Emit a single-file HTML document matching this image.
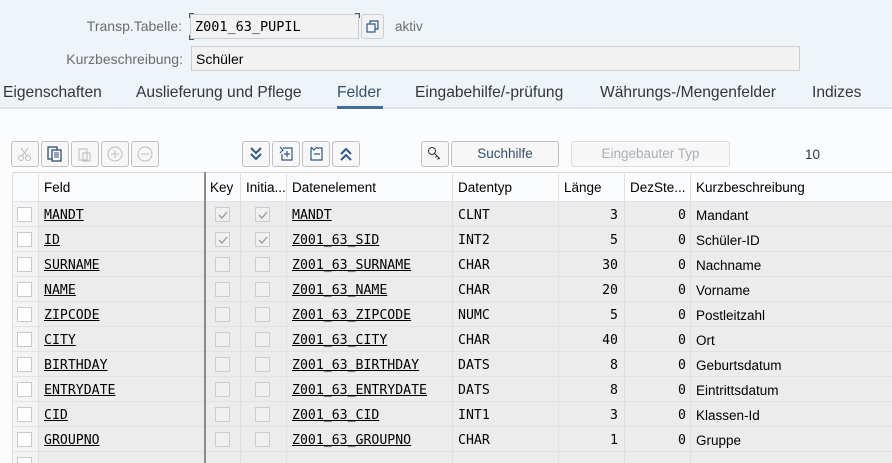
<!DOCTYPE html>
<html><head><meta charset="utf-8"><style>
*{margin:0;padding:0;box-sizing:border-box}
html,body{width:892px;height:463px;overflow:hidden}
body{background:#eff4f9;font-family:"Liberation Sans","DejaVu Sans",sans-serif;position:relative;color:#32363a}
.a{position:absolute}
.lbl{font-size:14px;color:#6a6d70;text-align:right}
.inp{border:1px solid #c8cdd2;background:#f2f2f2;font-size:14px;padding:4px 4px;color:#000}
.tab{font-size:15.6px;color:#32363a;top:84px}
.btn{border:1px solid #bfbfbf;border-radius:3px;background:#f7f7f7;height:26px;top:141px}
.panel{left:0;top:108px;width:892px;height:355px;background:#fbfcfe}
.tbl{left:12px;top:172px;width:880px;height:291px;overflow:hidden}
.cell{position:absolute;font-size:13.5px;line-height:25px}
.mono{font-family:"DejaVu Sans Mono","Liberation Mono",monospace;font-size:13.2px;text-decoration:underline;color:#000}
.m2{font-family:"DejaVu Sans Mono","Liberation Mono",monospace;font-size:13.2px;color:#000}
.cb{position:absolute;width:15px;height:15px;border:1px solid #ccc;background:#f0f0f0}
.sel{position:absolute;left:5px;width:15px;height:15px;border:1px solid #c9c9c9;background:#fff}
</style></head><body>
<div class="a lbl" style="left:60px;top:18px;width:122px">Transp.Tabelle:</div>
<div class="a inp" style="left:190px;top:14px;width:169px;height:25px;font-family:'DejaVu Sans Mono',monospace;font-size:13.5px">Z001_63_PUPIL</div>
<div class="a" style="left:189px;top:13px;width:171px;height:27px;border:1px solid #2a5c8f;clip-path:polygon(0 0,5px 0,5px 1px,1px 1px,1px 5px,0 5px,0 100%,5px 100%,5px calc(100% - 1px),1px calc(100% - 1px),1px calc(100% - 5px),0 calc(100% - 5px),0 0,100% 0,100% 5px,calc(100% - 1px) 5px,calc(100% - 1px) 1px,calc(100% - 5px) 1px,calc(100% - 5px) 0)"></div>
<div class="a" style="left:361px;top:14px;width:23px;height:25px;border:1px solid #c8cdd2;border-radius:3px;background:#f2f2f2"><svg width="21" height="23"><rect x="5" y="9" width="8" height="8" fill="none" stroke="#2c5a86" stroke-width="1.2"/><path d="M8 9V6h8v8h-3" fill="none" stroke="#2c5a86" stroke-width="1.2"/></svg></div>
<div class="a" style="left:395px;top:19px;font-size:13.5px;color:#6a6d70">aktiv</div>
<div class="a lbl" style="left:40px;top:51px;width:143px">Kurzbeschreibung:</div>
<div class="a inp" style="left:191px;top:46px;width:609px;height:25px">Schüler</div>
<div class="a tab" style="left:3px">Eigenschaften</div>
<div class="a tab" style="left:136px">Auslieferung und Pflege</div>
<div class="a tab" style="left:337px;color:#32506e">Felder</div>
<div class="a" style="left:337px;top:106px;width:46px;height:3px;background:#3f6e9a"></div>
<div class="a tab" style="left:415px">Eingabehilfe/-prüfung</div>
<div class="a tab" style="left:600px">Währungs-/Mengenfelder</div>
<div class="a tab" style="left:812px">Indizes</div>
<div class="a panel"></div>
<div class="a" style="left:0;top:107px;width:892px;height:2px;background:#dce5ef"></div>
<div class="a" style="left:337px;top:106px;width:46px;height:3px;background:#3f6e9a"></div>
<div class="a btn" style="left:11px;width:28px"><svg width="26" height="24"><circle cx="9" cy="16" r="2.5" fill="none" stroke="#bbb"/><circle cx="16" cy="16" r="2.5" fill="none" stroke="#bbb"/><path d="M10 14L16 6M15 14L9 6" stroke="#bbb"/></svg></div>
<div class="a btn" style="left:41px;width:28px"><svg width="26" height="24"><rect x="6" y="5" width="9" height="12" fill="none" stroke="#2c4d6e" stroke-width="1.3"/><rect x="10" y="8" width="9" height="11" fill="#fff" stroke="#2c4d6e" stroke-width="1.3"/><path d="M12 11h5M12 13h5M12 15h5" stroke="#2c4d6e"/></svg></div>
<div class="a btn" style="left:71px;width:28px"><svg width="26" height="24"><rect x="7" y="7" width="8" height="11" fill="none" stroke="#bbb"/><rect x="11" y="11" width="7" height="8" fill="none" stroke="#bbb"/></svg></div>
<div class="a btn" style="left:101px;width:28px"><svg width="26" height="24"><circle cx="13" cy="12" r="7" fill="none" stroke="#bbb"/><path d="M9 12h8M13 8v8" stroke="#bbb"/></svg></div>
<div class="a btn" style="left:131px;width:28px"><svg width="26" height="24"><circle cx="13" cy="12" r="7" fill="none" stroke="#bbb"/><path d="M9 12h8" stroke="#bbb"/></svg></div>
<div class="a btn" style="left:242px;width:28px"><svg width="26" height="24"><path d="M8 6l5 5 5-5M8 12l5 5 5-5" fill="none" stroke="#2c5a86" stroke-width="2"/></svg></div>
<div class="a btn" style="left:272px;width:28px"><svg width="26" height="24"><path d="M10 6h9v12H9v-6M7 5l3 3-3 3M11 12h6M14 9v6" fill="none" stroke="#2c5a86" stroke-width="1.2"/></svg></div>
<div class="a btn" style="left:302px;width:28px"><svg width="26" height="24"><path d="M14 6h5v12H8V6M8 5l3 3 3-3M11 12h6" fill="none" stroke="#2c5a86" stroke-width="1.2"/></svg></div>
<div class="a btn" style="left:332px;width:28px"><svg width="26" height="24"><path d="M8 12l5-5 5 5M8 18l5-5 5 5" fill="none" stroke="#2c5a86" stroke-width="2"/></svg></div>
<div class="a btn" style="left:421px;width:28px"><svg width="26" height="24"><circle cx="10" cy="9" r="3.5" fill="none" stroke="#333"/><path d="M12 11l6 6M15 14l-1.5 1.5M17 16l-1.5 1.5" stroke="#333"/></svg></div>
<div class="a btn" style="left:451px;width:108px;font-size:13.5px;text-align:center;line-height:24px;color:#32506e">Suchhilfe</div>
<div class="a btn" style="left:571px;width:159px;font-size:13.5px;text-align:center;line-height:24px;color:#a5b0bb;border-color:#ddd">Eingebauter Typ</div>
<div class="a" style="left:805px;top:147px;font-size:13.5px;color:#32363a">10</div>
<div class="a tbl" id="t"></div>
<script>
const cols=[0,26,192,228,274,440,546,612,678,880];
const t=document.getElementById('t');
let h='<div style="position:absolute;left:0;top:0;width:880px;height:30px;background:#fbfcfe;border-top:1px solid #d5d5d5;border-bottom:1px solid #e0e0e0"></div>';
const heads=["","Feld","Key","Initia...","Datenelement","Datentyp","Länge","DezSte...","Kurzbeschreibung"];
heads.forEach((s,i)=>{h+=`<div class="cell" style="left:${cols[i]+6}px;top:3px;color:#000">${s}</div>`});
const rows=[["MANDT","MANDT","CLNT",3,"Mandant",1],["ID","Z001_63_SID","INT2",5,"Schüler-ID",1],["SURNAME","Z001_63_SURNAME","CHAR",30,"Nachname"],["NAME","Z001_63_NAME","CHAR",20,"Vorname"],["ZIPCODE","Z001_63_ZIPCODE","NUMC",5,"Postleitzahl"],["CITY","Z001_63_CITY","CHAR",40,"Ort"],["BIRTHDAY","Z001_63_BIRTHDAY","DATS",8,"Geburtsdatum"],["ENTRYDATE","Z001_63_ENTRYDATE","DATS",8,"Eintrittsdatum"],["CID","Z001_63_CID","INT1",3,"Klassen-Id"],["GROUPNO","Z001_63_GROUPNO","CHAR",1,"Gruppe"],["","","","","",0,1]];
rows.forEach((r,k)=>{const y=30+k*25;const ty=y+1;
h+=`<div style="position:absolute;left:26px;top:${y}px;width:854px;height:25px;background:#ececec;border-bottom:1px solid #e2e2e2"></div>`;
h+=`<div style="position:absolute;left:0;top:${y}px;width:26px;height:25px;background:#f4f4f4;border-bottom:1px solid #e2e2e2"></div>`;
h+=`<div class="sel" style="top:${y+5}px"></div>`;
if(r[6])return;
const ck=r[5]?'<svg width="13" height="13"><path d="M3 7l3 3 5-6" fill="none" stroke="#999" stroke-width="1.3"/></svg>':'';
h+=`<div class="cell mono" style="left:32px;top:${ty}px">${r[0]}</div>`;
h+=`<div class="cb" style="left:203px;top:${y+5}px">${ck}</div><div class="cb" style="left:243px;top:${y+5}px">${ck}</div>`;
h+=`<div class="cell mono" style="left:280px;top:${ty}px">${r[1]}</div>`;
h+=`<div class="cell m2" style="left:446px;top:${ty}px">${r[2]}</div>`;
h+=`<div class="cell m2" style="left:546px;width:60px;text-align:right;top:${ty}px">${r[3]}</div>`;
h+=`<div class="cell m2" style="left:612px;width:62px;text-align:right;top:${ty}px">0</div>`;
h+=`<div class="cell" style="left:684px;top:${ty}px;color:#000">${r[4]}</div>`;});
cols.slice(1,9).forEach((x,i)=>{h+=`<div style="position:absolute;left:${x}px;top:0;width:${i==1?2:1}px;height:291px;background:${i==1?'#8a8a8a':'#e0e0e0'}"></div>`});
h+='<div style="position:absolute;left:0;top:0;width:1px;height:291px;background:#e0e0e0"></div>';
t.innerHTML=h;
</script>
</body></html>
